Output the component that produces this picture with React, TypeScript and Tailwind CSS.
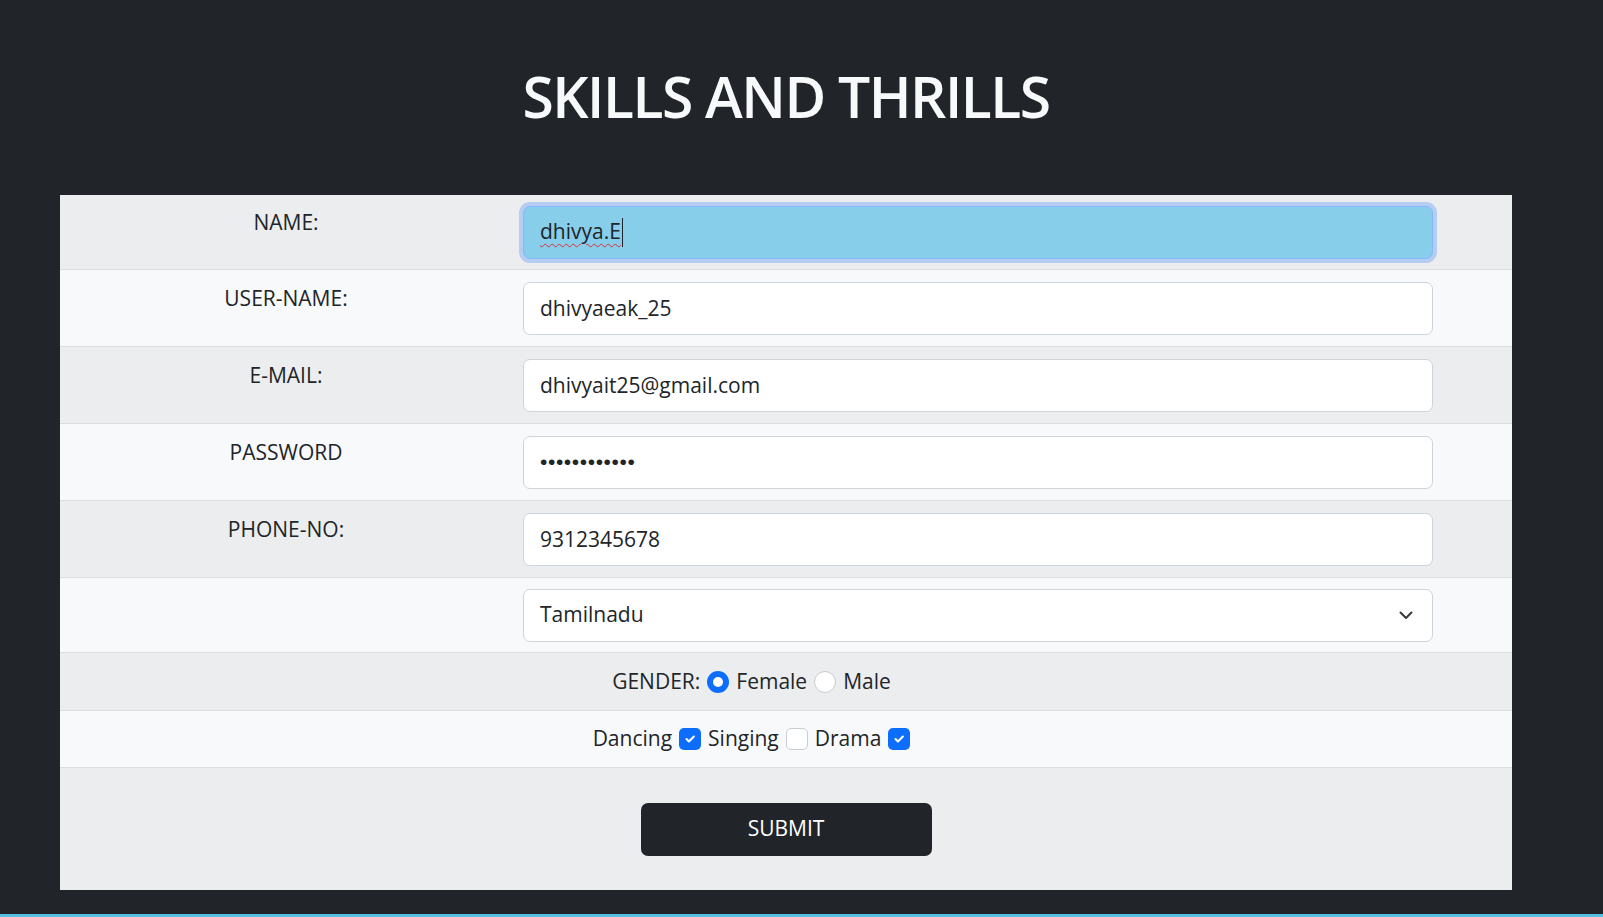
import { useState } from 'react'

const font = { fontFamily: '"Open Sans", "Noto Sans", sans-serif' }

const fields = [
  { label: 'USER-NAME:', value: 'dhivyaeak_25', type: 'text', h: 'h-[77px]', bg: 'bg-[#f8f9fa]' },
  { label: 'E-MAIL:', value: 'dhivyait25@gmail.com', type: 'email', h: 'h-[77px]', bg: 'bg-[#ecedee]' },
  { label: 'PASSWORD', value: 'dhivya@12345', type: 'password', h: 'h-[77px]', bg: 'bg-[#f8f9fa]' },
  { label: 'PHONE-NO:', value: '9312345678', type: 'tel', h: 'h-[77px]', bg: 'bg-[#ecedee]' },
]

function Check({ on }: { on: boolean }) {
  return on ? (
    <span className="inline-flex h-[22px] w-[22px] items-center justify-center rounded-[5px] bg-[#0d6efd]">
      <svg width="14" height="14" viewBox="0 0 20 20" fill="none">
        <path d="m5 10 3.5 3.5 7-7" stroke="#fff" strokeWidth="3" strokeLinecap="round" strokeLinejoin="round" />
      </svg>
    </span>
  ) : (
    <span className="inline-block h-[22px] w-[22px] rounded-[5px] border border-[#c9ccd0] bg-white" />
  )
}

function Radio({ on }: { on: boolean }) {
  return on ? (
    <span className="inline-flex h-[22px] w-[22px] items-center justify-center rounded-full bg-[#0d6efd]">
      <span className="h-[10px] w-[10px] rounded-full bg-white" />
    </span>
  ) : (
    <span className="inline-block h-[22px] w-[22px] rounded-full border border-[#c9ccd0] bg-white" />
  )
}

export default function App() {
  const [state, setState] = useState('Tamilnadu')

  return (
    <div className="min-h-screen bg-[#212529] pt-[61px]" style={font}>
      <div className="ml-[60px] w-[1452px]">
        <h1 className="mb-[64px] text-center text-[57px] font-semibold leading-[70px] tracking-[-1.5px] text-[#f8f9fa]">
          SKILLS AND THRILLS
        </h1>

        <div className="flex flex-col text-[21px] text-[#212529]">
          {/* focused name row */}
          <div className="flex h-[75px] border-b border-[#dcdddf] bg-[#ecedee]">
            <div className="w-[452px] pt-[12px] text-center leading-[30px]">NAME:</div>
            <div className="flex w-[931px] items-center pl-[11px]">
              <div className="flex h-[53px] w-[910px] items-center rounded-[7px] border border-[#86b7fe] bg-[#87ceeb] px-[16px] shadow-[0_0_0_4px_rgba(13,110,253,0.25)]">
                <span className="underline decoration-[#d9303a] decoration-wavy decoration-1 underline-offset-[4px]">dhivya.E</span>
                <span className="ml-px h-[29px] w-px bg-[#212529]" />
              </div>
            </div>
          </div>

          {fields.map((f) => (
            <div key={f.label} className={`flex ${f.h} border-b border-[#dcdddf] ${f.bg}`}>
              <div className="w-[452px] pt-[13px] text-center leading-[30px]">{f.label}</div>
              <div className="flex w-[931px] items-center pl-[11px]">
                <input
                  type={f.type}
                  defaultValue={f.value}
                  className={`h-[53px] w-[910px] rounded-[7px] border border-[#ced4da] bg-white px-[16px] text-[21px] text-[#212529] outline-none ${
                    f.type === 'password' ? 'font-["Liberation_Sans",Arial,sans-serif] tracking-[0.6px]' : ''
                  }`}
                />
              </div>
            </div>
          ))}

          <div className="flex h-[75px] border-b border-[#dcdddf] bg-[#f8f9fa]">
            <div className="w-[452px]" />
            <div className="flex w-[931px] items-center pl-[11px]">
              <div className="relative w-[910px]">
                <select
                  value={state}
                  onChange={(e) => setState(e.target.value)}
                  className="h-[53px] w-full appearance-none rounded-[7px] border border-[#ced4da] bg-white px-[16px] text-[21px] text-[#212529] outline-none"
                >
                  <option>Tamilnadu</option>
                  <option>Kerala</option>
                  <option>Karnataka</option>
                  <option>Andhra Pradesh</option>
                </select>
                <svg
                  className="pointer-events-none absolute right-[20px] top-[22px]"
                  width="14"
                  height="9"
                  viewBox="0 0 14 9"
                  fill="none"
                >
                  <path d="M1.5 1.5 7 7l5.5-5.5" stroke="#343a40" strokeWidth="2" strokeLinecap="round" strokeLinejoin="round" />
                </svg>
              </div>
            </div>
          </div>

          <div className="flex h-[58px] border-b border-[#dcdddf] bg-[#ecedee]">
            <div className="flex w-[1383px] items-center justify-center gap-[7px]">
              <span>GENDER:</span>
              <Radio on />
              <span>Female</span>
              <Radio on={false} />
              <span>Male</span>
            </div>
          </div>

          <div className="flex h-[57px] border-b border-[#dcdddf] bg-[#f8f9fa]">
            <div className="flex w-[1383px] items-center justify-center gap-[7px]">
              <span>Dancing</span>
              <Check on />
              <span>Singing</span>
              <Check on={false} />
              <span>Drama</span>
              <Check on />
            </div>
          </div>

          <div className="flex h-[122px] items-center justify-center bg-[#ecedee]">
            <button className="h-[53px] w-[291px] rounded-[7px] bg-[#212529] text-[21px] text-white">SUBMIT</button>
          </div>
        </div>
      </div>
      <div className="mt-[24px] h-[20px] bg-[#56bde6]" />
    </div>
  )
}
